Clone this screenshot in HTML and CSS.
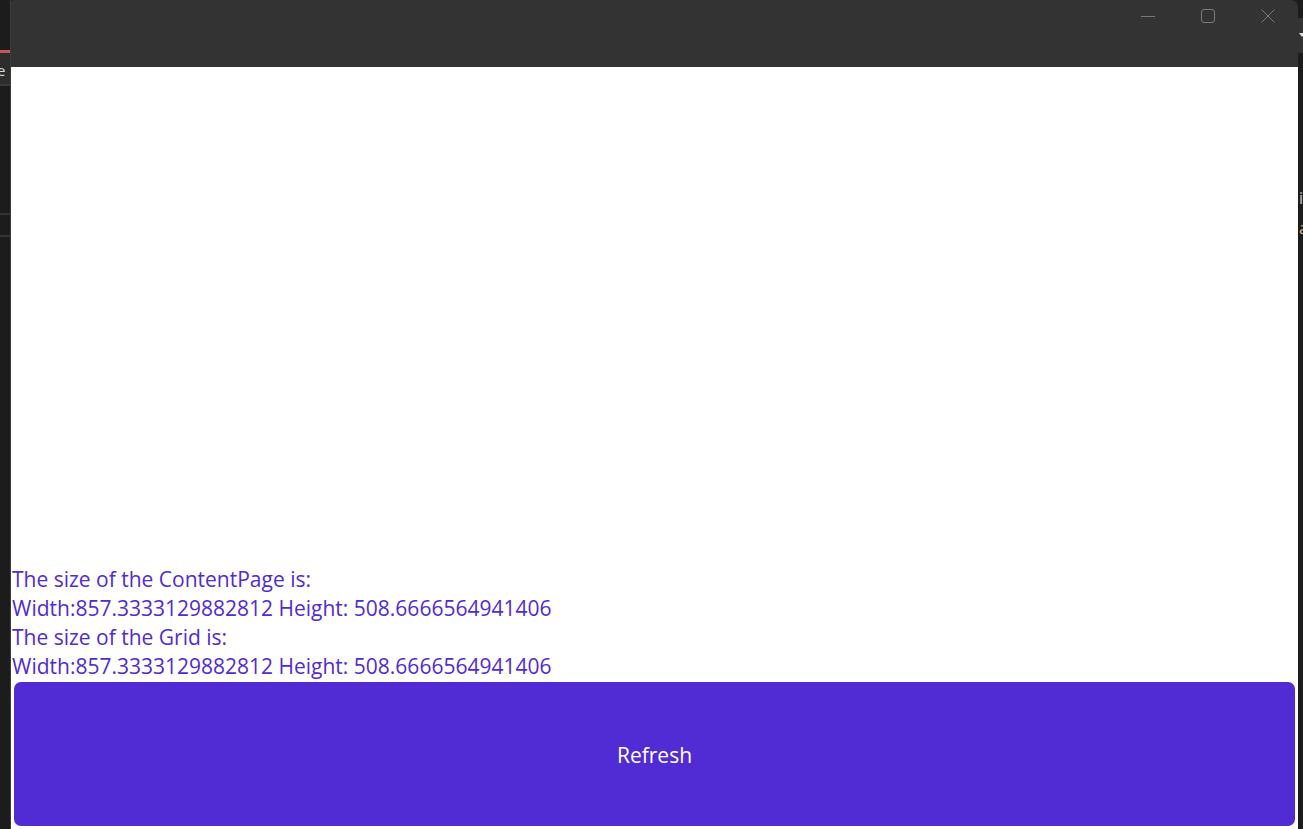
FILE: index.html
```html
<!DOCTYPE html>
<html lang="en">
<head>
  <meta charset="UTF-8" />
  <title>SizeDemo</title>
  <link rel="stylesheet" href="styles.css">
</head>
<body>
  <div class="desk">
    <div class="side-left">
      <div class="tab-red"></div>
      <div class="tab-file"><span>e</span></div>
      <div class="rule rule-a"></div>
      <div class="rule rule-b"></div>
    </div>

    <div class="window">
      <div class="titlebar">
        <div class="caption-btn">
          <svg width="16" height="16" viewBox="0 0 16 16"><path d="M1 8.5h14" stroke="#7a7a7a" stroke-width="1"/></svg>
        </div>
        <div class="caption-btn">
          <svg width="16" height="16" viewBox="0 0 16 16"><rect x="1.5" y="1.5" width="13" height="13" rx="2.5" fill="none" stroke="#7a7a7a" stroke-width="1"/></svg>
        </div>
        <div class="caption-btn">
          <svg width="16" height="16" viewBox="0 0 16 16"><path d="M1.5 1.5l13 13M14.5 1.5l-13 13" stroke="#7a7a7a" stroke-width="1"/></svg>
        </div>
      </div>

      <div class="content">
        <div class="info">
          <div class="line">The size of the ContentPage is:</div>
          <div class="line">Width:857.3333129882812 Height: 508.6666564941406</div>
          <div class="line">The size of the Grid is:</div>
          <div class="line">Width:857.3333129882812 Height: 508.6666564941406</div>
        </div>
        <div class="refresh-btn">Refresh</div>
      </div>
    </div>

    <div class="side-right">
      <div class="tab-gray"><span class="arrow"></span></div>
      <div class="peek peek-i">i</div>
      <div class="peek peek-a">a</div>
    </div>
  </div>
</body>
</html>
```

FILE: styles.css
```css
* {
  box-sizing: border-box;
}

body {
  margin: 0;
  background: #1e1e1e;
  overflow: hidden;
  font-family: "Open Sans", "Noto Sans", sans-serif;
}

.desk {
  display: flex;
  height: 829px;
}

.side-left {
  width: 11px;
  flex-shrink: 0;
  background: #1c1c1c;
  border-right: 1px solid #3c3c3c;
  padding-top: 50px;
  overflow: hidden;
}

.tab-red {
  height: 3px;
  background: #c2575c;
}

.tab-file {
  height: 33px;
  background: #2d2d2d;
  border-bottom: 2px solid #3a3a3a;
  color: #d9d9d9;
  font-size: 15px;
  line-height: 33px;
  padding-top: 2px;
}

.tab-file span {
  display: block;
  margin-left: -3px;
  line-height: 30px;
}

.rule {
  height: 2px;
  background: #333;
}

.rule-a {
  margin-top: 127px;
}

.rule-b {
  margin-top: 20px;
}

.window {
  width: 1287px;
  flex-shrink: 0;
  display: flex;
  flex-direction: column;
  border-radius: 3px 8px 0 0;
  overflow: hidden;
}

.titlebar {
  height: 67px;
  background: #333333;
  display: flex;
  justify-content: flex-end;
}

.caption-btn {
  width: 60px;
  height: 32px;
  display: flex;
  align-items: center;
  justify-content: center;
}

.content {
  flex: 1;
  background: #fff;
  display: flex;
  flex-direction: column;
  justify-content: flex-end;
  padding: 0 3px 3px 0;
}

.info {
  color: #512bd4;
  font-size: 21px;
  line-height: 29px;
  padding-left: 1px;
  margin-bottom: 1px;
}

.refresh-btn {
  height: 144px;
  margin-left: 3px;
  background: #512bd4;
  border-radius: 7px;
  color: #fff;
  font-size: 21px;
  padding-top: 2px;
  display: flex;
  align-items: center;
  justify-content: center;
}

.side-right {
  flex: 1;
  background: #1c1c1c;
  padding-top: 18px;
  overflow: hidden;
}

.tab-gray {
  height: 35px;
  background: #333;
  position: relative;
}

.arrow {
  position: absolute;
  left: 1px;
  top: 15px;
  border-left: 3px solid transparent;
  border-right: 3px solid transparent;
  border-top: 4px solid #ddd;
}

.peek {
  font-size: 16px;
  line-height: 20px;
  margin-left: 1px;
}

.peek-i {
  margin-top: 135px;
  color: #c8c8c8;
}

.peek-a {
  margin-top: 10px;
  color: #d7ba7d;
}
```
